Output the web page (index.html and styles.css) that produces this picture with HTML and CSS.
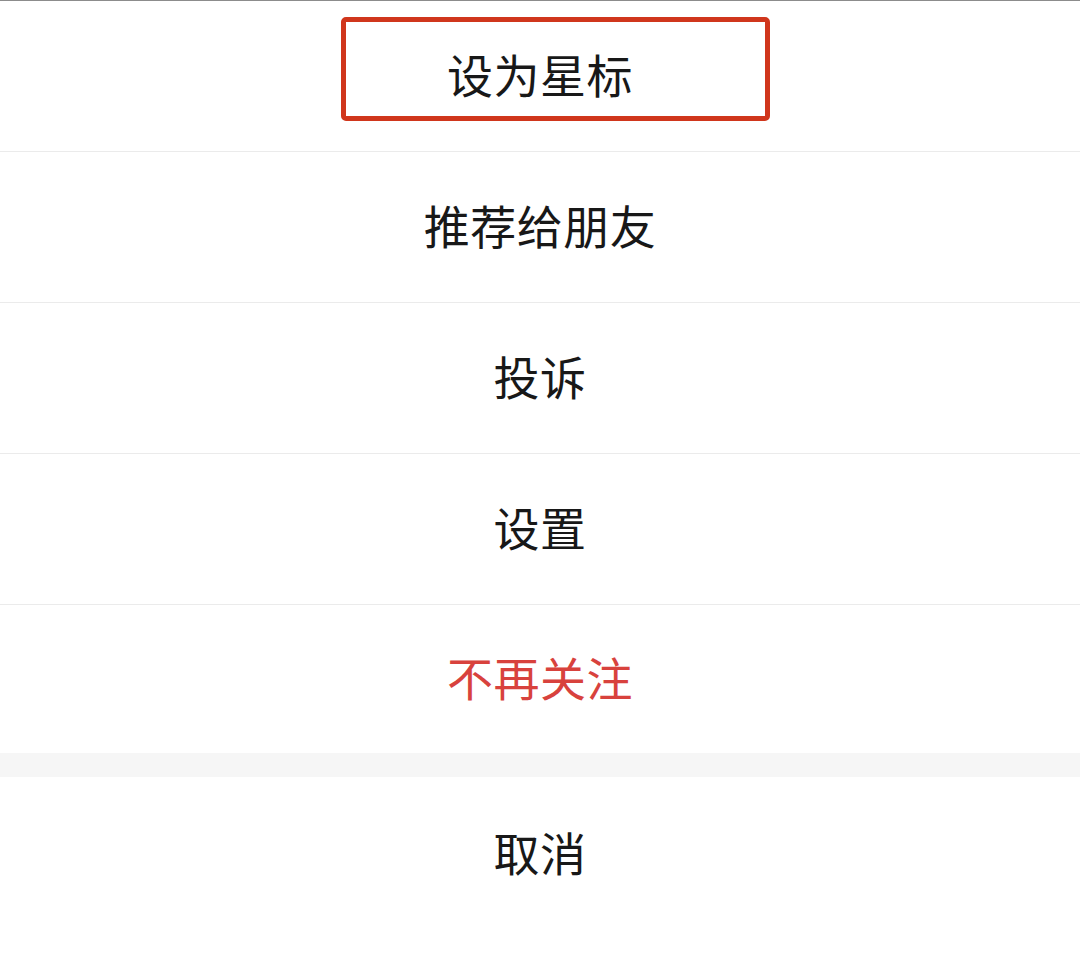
FILE: index.html
```html
<!DOCTYPE html>
<html lang="zh-CN">
<head>
<meta charset="utf-8">
<title>操作菜单</title>
<link rel="stylesheet" href="styles.css">
</head>
<body>
<div class="sheet">
  <div class="menu">
    <div class="item item-starred">
      <span class="label">设为星标</span>
      <span class="highlight"></span>
    </div>
    <div class="item"><span class="label">推荐给朋友</span></div>
    <div class="item"><span class="label">投诉</span></div>
    <div class="item"><span class="label">设置</span></div>
    <div class="item item-danger item-last"><span class="label">不再关注</span></div>
  </div>
  <div class="gap"></div>
  <div class="cancel"><span class="label">取消</span></div>
</div>
</body>
</html>
```

FILE: styles.css
```css
*, *::before, *::after {
  box-sizing: border-box;
}

html, body {
  margin: 0;
  padding: 0;
  background: #ffffff;
}

body {
  width: 1080px;
  height: 980px;
  overflow: hidden;
  font-family: "Noto Sans CJK SC", "Noto Sans", sans-serif;
  color: #181818;
}

.sheet {
  border-top: 1px solid #8c8c8c;
  display: flex;
  flex-direction: column;
}

.menu {
  display: flex;
  flex-direction: column;
}

.item {
  position: relative;
  height: 151px;
  padding-bottom: 6px;
  border-bottom: 1px solid #ebebeb;
  display: flex;
  align-items: center;
  justify-content: center;
}

.item-last {
  height: 148px;
  border-bottom: none;
}

.label {
  font-size: 46px;
  line-height: 1;
  letter-spacing: 0.5px;
}

.item-danger .label {
  color: #d8423d;
}

.highlight {
  position: absolute;
  left: 341px;
  top: 16px;
  width: 429px;
  height: 104px;
  border: 5px solid #d0361c;
  border-radius: 5px;
}

.gap {
  height: 24px;
  background: #f6f6f6;
}

.cancel {
  height: 152px;
  padding-bottom: 4px;
  display: flex;
  align-items: center;
  justify-content: center;
}
```
